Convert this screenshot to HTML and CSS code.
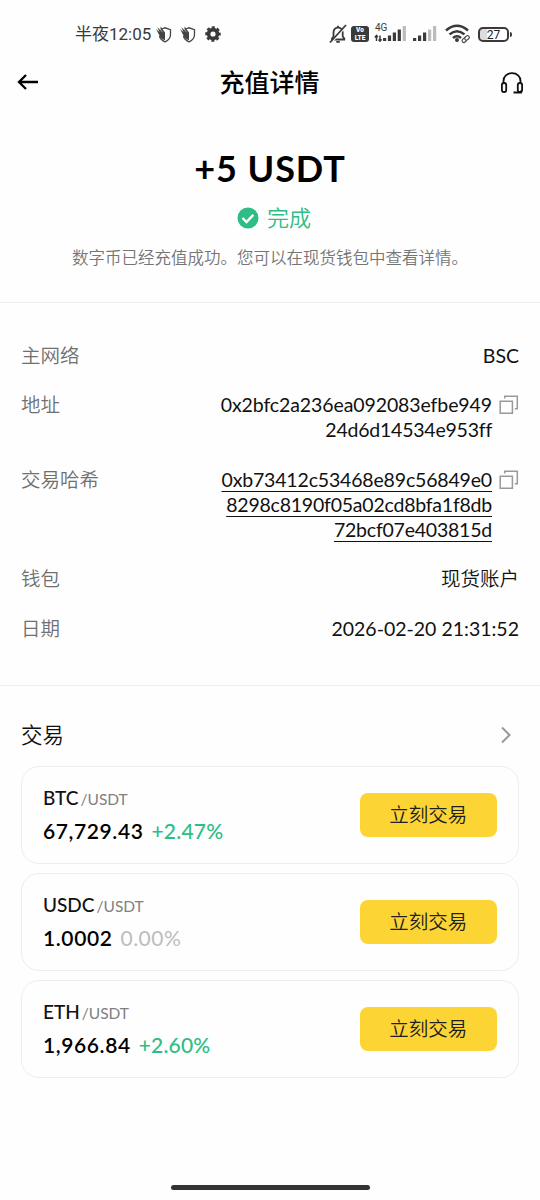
FILE: index.html
```html
<!DOCTYPE html>
<html lang="zh-CN">
<head>
<meta charset="utf-8">
<title>充值详情</title>
<link rel="stylesheet" href="styles.css">
</head>
<body>
<svg class="defs" width="0" height="0">
  <symbol id="shield" viewBox="0 0 16 17">
    <path d="M6 3 9.500 1.800 15 3.600V8.500C15 12 12.500 14.500 9.500 15.800 6.500 14.500 4.500 12.500 4 10" fill="none" stroke="#444" stroke-width="1.300"/>
    <path d="M.5 3 4 6 1.800 1.200 5 4 5 .5 9.500 6.500V14.200C6 13 4 11 3.500 8.500Z" fill="#444"/>
    <path d="M4 2.500 7 6.200" stroke="#fff" stroke-width=".5"/>
  </symbol>
  <symbol id="copy" viewBox="0 0 20 20">
    <path d="M1.200 6.200H13.400V18.300H1.200ZM5.800 3.500V1.200H18.300V13.800H15.800" fill="none" stroke="#999" stroke-width="1.500"/>
  </symbol>
</svg>
<div class="screen">
  <div class="status">
    <div class="status-left">
      <span class="clock">半夜12:05</span>
      <svg class="shield" width="17" height="17"><use href="#shield"/></svg>
      <svg class="shield" width="17" height="17"><use href="#shield"/></svg>
      <svg class="gear" width="16" height="16" viewBox="0 0 16 16"><circle cx="8" cy="8" r="4.400" fill="none" stroke="#3a3a3a" stroke-width="3.600"/><circle cx="8" cy="8" r="6.600" fill="none" stroke="#3a3a3a" stroke-width="2.300" stroke-dasharray="3.100 2.084" stroke-dashoffset="1.500"/></svg>
    </div>
    <div class="status-right">
      <svg width="18" height="20" viewBox="0 0 18 20"><path d="M3 15.500V14.500L4.500 12.500V8.500C4.500 5.500 6.300 3.700 9 3.300 12 3.700 13.700 5.500 13.700 8.500V12.500L15.300 14.500V15.500ZM9 3.300V1.800M7.300 17.800H10.800" fill="none" stroke="#3a3a3a" stroke-width="1.800"/><path d="M18 1.500 2 19" stroke="#fefefe" stroke-width="1.500"/><path d="M17 1 1 18.500" stroke="#3a3a3a" stroke-width="1.800"/></svg>
      <span class="volte"><span>Vo</span><span>LTE</span></span>
      <span class="cell"><span class="gen">4G</span>
        <svg width="33" height="16" viewBox="0 0 33 16"><path d="M2.500 15V9.800M.8 11.500 2.500 9.500 3.800 11.200M6 9.500V15M4.600 13.500 6 15.200 7.600 13.300" fill="none" stroke="#3a3a3a" stroke-width="1.500"/><path d="M9 12h3.200v3H9ZM13.900 9.500h3.200V15h-3.200ZM18.800 6.500H22V15h-3.200ZM23.700 3.500h3.200V15h-3.200Z" fill="#3a3a3a"/><path d="M28.700 0h3.200v15h-3.200Z" fill="#bbb"/></svg>
      </span>
      <svg class="sim2" width="24" height="16" viewBox="0 0 24 16"><path d="M0 12h3.200v3H0ZM5 9.500h3.200V15H5ZM10 6.500h3.200V15H10Z" fill="#3a3a3a"/><path d="M15 3.500h3.200V15H15ZM20 0h3.200v15H20Z" fill="#bbb"/></svg>
      <svg class="wifi" width="25" height="20" viewBox="0 0 25 20"><path d="M1 6.500Q12 -3 23 6.500M4.500 10.400Q12 4 19.500 10.400M8 14Q12 10.500 16 14" fill="none" stroke="#3a3a3a" stroke-width="2.500"/><circle cx="12" cy="16" r="2" fill="#3a3a3a"/><path d="m15.400 17.300 6.500-6.500 4 4-6.500 6.500Z" fill="#fefefe"/><g fill="#fefefe" stroke="#444" stroke-width="1.100" transform="rotate(-42 20.500 15.200)"><rect x="16.500" y="13.400" width="5" height="3.600" rx="1.800"/><rect x="20" y="13.400" width="5" height="3.600" rx="1.800"/></g></svg>
      <span class="battery"><span>27</span></span><span class="nub"></span>
    </div>
  </div>

  <header class="header">
    <svg width="22" height="18" viewBox="0 0 22 18"><path d="M21 9H2.500M9 2 2 9 9 16" fill="none" stroke="#000" stroke-width="2.300"/></svg>
    <h1>充值详情</h1>
    <svg class="headset" width="24" height="22" viewBox="0 0 24 22"><path d="M3.500 11V9C3.500 4.500 7 1.200 12 1.200S20.500 4.500 20.500 9V11M21 18.500V20.500H13.500" fill="none" stroke="#111" stroke-width="1.800"/><rect x="1.900" y="11" width="4.300" height="9" rx="2.100" fill="none" stroke="#111" stroke-width="1.800"/><rect x="17.800" y="11" width="4.300" height="9" rx="2.100" fill="none" stroke="#111" stroke-width="1.800"/></svg>
  </header>

  <section class="summary">
    <div class="amount">+5 USDT</div>
    <div class="state">
      <svg width="22" height="22" viewBox="0 0 22 22"><circle cx="11" cy="11" r="10.500" fill="#2dbd85"/><path d="M5.500 11 9.500 15 16.300 7.900" fill="none" stroke="#fff" stroke-width="2.400"/></svg>
      <span>完成</span>
    </div>
    <p class="note">数字币已经充值成功。您可以在现货钱包中查看详情。</p>
  </section>

  <section class="details">
    <div class="row"><span class="label">主网络</span><span class="value">BSC</span></div>
    <div class="row"><span class="label">地址</span><span class="value address"><span class="wide">0x2bfc2a236ea092083efbe949</span><br><span>24d6d14534e953ff</span></span><svg class="copy" width="20" height="20"><use href="#copy"/></svg></div>
    <div class="row"><span class="label">交易哈希</span><span class="value address hash"><span class="wide">0xb73412c53468e89c56849e0</span><br><span>8298c8190f05a02cd8bfa1f8db</span><br><span>72bcf07e403815d</span></span><svg class="copy" width="20" height="20"><use href="#copy"/></svg></div>
    <div class="row"><span class="label">钱包</span><span class="value account">现货账户</span></div>
    <div class="row"><span class="label">日期</span><span class="value">2026-02-20 21:31:52</span></div>
  </section>

  <section class="trade">
    <div class="trade-head"><h2>交易</h2><svg width="12" height="18" viewBox="0 0 12 18"><path d="M2 1.500 9.500 9 2 16.500" fill="none" stroke="#999" stroke-width="2"/></svg></div>
    <div class="cards">
      <div class="card"><div><div class="pair"><b>BTC</b><span>/USDT</span></div><div class="price"><b>67,729.43</b><span class="up">+2.47%</span></div></div><button class="buy">立刻交易</button></div>
      <div class="card"><div><div class="pair"><b>USDC</b><span>/USDT</span></div><div class="price"><b>1.0002</b><span class="flat">0.00%</span></div></div><button class="buy">立刻交易</button></div>
      <div class="card"><div><div class="pair"><b>ETH</b><span>/USDT</span></div><div class="price"><b>1,966.84</b><span class="up">+2.60%</span></div></div><button class="buy">立刻交易</button></div>
    </div>
  </section>
  <div class="home"><span></span></div>
</div>
</body>
</html>
```
FILE: styles.css
```css
* { box-sizing: border-box; }
body { margin: 0; background: #fefefe; font-family: Lato, "Noto Sans CJK SC", sans-serif; color: #111; }
.defs { position: absolute; }
.screen { width: 540px; height: 1200px; display: flex; flex-direction: column; overflow: hidden; }
h1, h2, p { margin: 0; }
svg { display: block; flex: none; }

.status { height: 56px; padding: 12px 28px 0 75px; display: flex; justify-content: space-between; align-items: center; color: #3a3a3a; }
.status-left, .status-right { display: flex; align-items: center; }
.clock { font: 17px/24px Roboto, "Noto Sans CJK SC", sans-serif; }
.shield { margin-left: 3.500px; margin-right: 3.500px; }
.gear { margin-left: 6px; }
.volte { width: 18px; height: 16px; margin-left: 4px; background: #3a3a3a; border-radius: 3px; color: #fff; font: 900 6.500px/8px Roboto, sans-serif; display: flex; flex-direction: column; align-items: center; justify-content: center; }
.cell { position: relative; margin-left: 5px; }
.gen { position: absolute; left: 1px; top: -4px; font: 10px/11px Roboto, sans-serif; }
.sim2 { margin-left: 6px; }
.wifi { margin-left: 8px; overflow: visible; }
.battery { width: 31px; height: 15px; margin-left: 8px; border: 2px solid #3a3a3a; border-radius: 5px; display: flex; justify-content: center; align-items: center; font: 400 12px/12px Roboto, sans-serif; background: linear-gradient(90deg, #ddd 7px, transparent 7px); }
.battery span { color: #222; padding-top: 1px; }
.nub { width: 2px; height: 5px; background: #3a3a3a; border-radius: 0 2px 2px 0; margin-left: 1px; }

.header { height: 52px; padding: 0 16px 0 17px; display: flex; align-items: center; justify-content: space-between; }
.header h1 { font-size: 25px; line-height: 36px; font-weight: 500; color: #000; padding-bottom: 1px; }
.headset { margin-top: 2px; }

.summary { height: 194.500px; padding-top: 37px; display: flex; flex-direction: column; align-items: center; border-bottom: 1px solid #f0f0f0; }
.amount { font-size: 36px; line-height: 46px; font-weight: 700; letter-spacing: .9px; color: #000; }
.state { display: flex; align-items: center; gap: 8px; margin-top: 11px; padding-left: 8px; font-size: 22px; line-height: 32px; font-weight: 350; color: #2dbd85; }
.note { font-size: 16.500px; line-height: 24px; margin-top: 12px; color: #757575; font-weight: 350; white-space: nowrap; }

.details { height: 383.500px; padding: 41px 21px 0; display: flex; flex-direction: column; gap: 24.800px; border-bottom: 1px solid #f0f0f0; font-size: 19.500px; line-height: 24.900px; }
.row { display: flex; align-items: flex-start; }
.label { color: #707070; font-weight: 350; margin-right: auto; }
.value { text-align: right; color: #111; }
.account { font-weight: 350; }
.copy { margin-left: 7px; margin-top: 2px; }
.address { letter-spacing: -.22px; }
.address .wide { letter-spacing: -.1px; }
.hash .wide { letter-spacing: -.17px; }
.hash span { text-decoration: underline; text-decoration-thickness: 1px; text-underline-offset: 4px; }

.trade { padding: 31px 21px 0; }
.trade-head { display: flex; align-items: center; justify-content: space-between; padding-right: 7px; height: 36px; }
.trade-head h2 { font-size: 21.500px; line-height: 36px; font-weight: 350; }
.cards { display: flex; flex-direction: column; gap: 9px; margin-top: 13px; }
.card { height: 98px; border: 1.500px solid #ededed; border-radius: 18px; padding: 0 21px; display: flex; align-items: center; justify-content: space-between; }
.pair { font-size: 19px; line-height: 28px; }
.pair b { font-weight: 500; }
.pair span { font-size: 15.500px; color: #808080; margin-left: 2px; }
.price { font-size: 21px; line-height: 30px; margin-top: 3px; padding-bottom: 1px; display: flex; gap: 8px; }
.price b { font-weight: 600; letter-spacing: .6px; color: #000; }
.price span { font-weight: 500; letter-spacing: .2px; }
.price .up { color: #2dbd85; }
.price .flat { color: #bdbdbd; font-weight: 400; letter-spacing: .5px; }
.buy { width: 137.500px; height: 44px; border: 0; border-radius: 8px; background: #fcd535; color: #202020; font: 350 19.500px/42px "Noto Sans CJK SC", sans-serif; padding: 0 0 2px; }
.home { margin-top: auto; height: 15.500px; display: flex; justify-content: center; }
.home span { width: 199px; height: 5px; border-radius: 3px; background: #333; }
```
